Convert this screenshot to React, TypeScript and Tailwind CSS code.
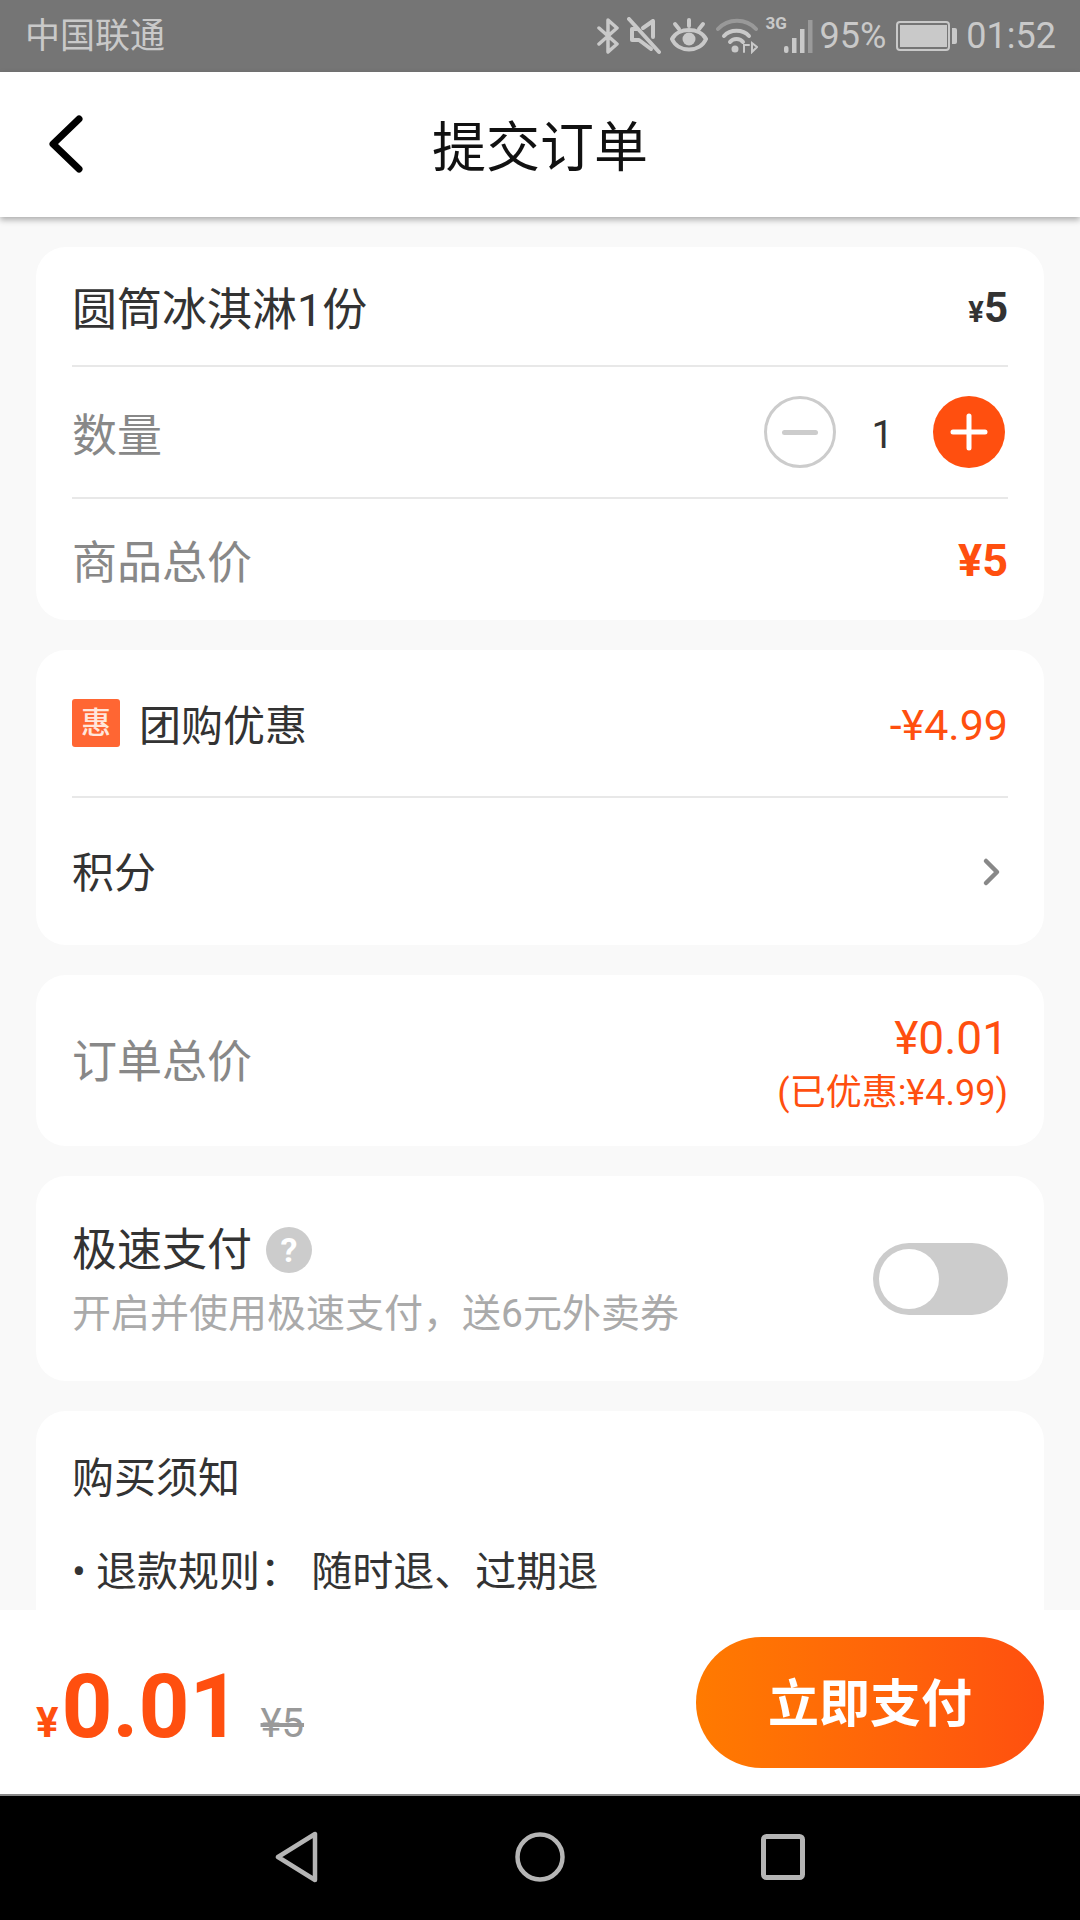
import React from 'react';

const FONT = "font-['Roboto','Noto_Sans_CJK_SC',sans-serif]";

const StatusIcons = () => (
  <div className="flex items-center text-[#c9c9c9]">
    {/* bluetooth */}
    <svg width="22" height="36" viewBox="0 0 22 36" fill="none" stroke="#c9c9c9" strokeWidth="3.5" strokeLinecap="round" strokeLinejoin="round">
      <path d="M2 10 L20 26 L11 34 L11 2 L20 10 L2 26" />
    </svg>
    {/* muted speaker */}
    <svg width="34" height="38" viewBox="0 0 34 38" fill="none" stroke="#c9c9c9" strokeWidth="4" strokeLinecap="round" strokeLinejoin="round" className="ml-[8px]">
      <path d="M26 4 L16 11 M26 4 L26 20 M5 12 L10 12 M5 12 L5 23 L12 23 L24 32" />
      <path d="M2 2 L32 35" />
    </svg>
    {/* eye comfort */}
    <svg width="38" height="36" viewBox="0 0 38 36" fill="none" stroke="#c9c9c9" strokeWidth="4" strokeLinecap="round" className="ml-[9px]">
      <path d="M2 21 C8 9 30 9 36 21 C30 35 8 35 2 21 Z" />
      <circle cx="19" cy="21" r="6.5" fill="#c9c9c9" stroke="none" />
      <path d="M19 2 L19 8 M5 6 L9 11 M33 6 L29 11" />
    </svg>
    {/* wifi */}
    <svg width="42" height="36" viewBox="0 0 42 36" fill="none" strokeLinecap="round" className="ml-[8px]">
      <path d="M2 11 C12 0 30 0 40 11" stroke="#999999" strokeWidth="4" />
      <path d="M8 18 C14 11 27 11 33 18" stroke="#c9c9c9" strokeWidth="4" />
      <path d="M14 24 C17 20 24 20 27 24" stroke="#c9c9c9" strokeWidth="4" />
      <circle cx="19" cy="31" r="3.5" fill="#c9c9c9" />
      <path d="M28 34 L28 27 L33 27 M36 25 L36 34 L41 29 Z" stroke="#c9c9c9" strokeWidth="2" />
    </svg>
    {/* 3G + signal */}
    <div className="relative ml-[8px] w-[54px] h-[36px]">
      <span className={`absolute left-0 top-[-5px] text-[17px] font-bold leading-[20px] text-[#c9c9c9] ${FONT}`}>3G</span>
      <svg width="54" height="36" viewBox="0 0 54 36" className="absolute left-0 top-0">
        <rect x="18" y="28" width="4.5" height="7" rx="2" fill="#c9c9c9" />
        <rect x="26" y="20" width="4.5" height="15" fill="#c9c9c9" />
        <rect x="34" y="11" width="4.5" height="24" fill="#c9c9c9" />
        <rect x="42" y="2" width="4.5" height="33" fill="#9a9a9a" />
      </svg>
    </div>
    <span className={`text-[36px] leading-none ${FONT}`}>95%</span>
    {/* battery */}
    <div className="ml-[10px] flex items-center">
      <div className="w-[54px] h-[30px] rounded-[4px] border-2 border-[#c9c9c9] p-[2px]">
        <div className="w-[47px] h-full bg-[#c9c9c9]" />
      </div>
      <div className="ml-[2px] w-[5px] h-[16px] rounded-r-[2px] bg-[#c9c9c9]" />
    </div>
    <span className={`ml-[9px] text-[36px] leading-none ${FONT}`}>01:52</span>
  </div>
);

const Divider = () => <div className="h-[2px] bg-[#e8e8e8]" />;

const App = () => {
  return (
    <div className={`flex flex-col w-[1080px] h-[1920px] overflow-hidden bg-[#f9f9f9] ${FONT}`}>
      <div className="flex items-center justify-between h-[72px] shrink-0 bg-[#757575] pl-[25px] pr-[24px]">
        <span className="text-[35px] leading-none text-[#c9c9c9]">中国联通</span>
        <StatusIcons />
      </div>

      <div className="relative z-10 flex items-center justify-center h-[145px] shrink-0 bg-white shadow-[0_3px_6px_rgba(0,0,0,0.3)]">
        <svg width="36" height="58" viewBox="0 0 36 58" fill="none" stroke="#000" strokeWidth="7" strokeLinecap="round" strokeLinejoin="round" className="absolute left-[48px] top-[43px]">
          <path d="M31 4 L5 29 L31 54" />
        </svg>
        <h1 className="pt-[8px] text-[54px] leading-none text-[#111]">提交订单</h1>
      </div>

      <main className="flex-1 min-h-0 overflow-hidden px-9 pt-[30px] flex flex-col gap-[30px]">
        <section className="shrink-0 bg-white rounded-[30px] px-9 h-[373px] flex flex-col">
          <div className="h-[118px] flex items-center justify-between">
            <span className="pt-[8px] text-[45px] text-[#333] leading-none">圆筒冰淇淋1份</span>
            <span className="pt-[4px] font-bold text-[#333] leading-none flex items-baseline">
              <span className="text-[29px]">¥</span>
              <span className="text-[42px]">5</span>
            </span>
          </div>
          <Divider />
          <div className="h-[130px] flex items-center justify-between">
            <span className="pt-[8px] text-[45px] text-[#888] leading-none">数量</span>
            <div className="flex items-center mr-[3px]">
              <div className="w-[72px] h-[72px] rounded-full border-[3px] border-[#cccccc] flex items-center justify-center">
                <div className="w-[36px] h-[5px] rounded-full bg-[#cccccc]" />
              </div>
              <span className="pt-[6px] pr-[4px] w-[97px] text-center text-[39px] text-[#333] leading-none">1</span>
              <div className="w-[72px] h-[72px] rounded-full bg-[#ff4f0f] flex items-center justify-center">
                <svg width="38" height="38" viewBox="0 0 38 38" stroke="#fff" strokeWidth="5" strokeLinecap="round">
                  <path d="M3 19 H35 M19 3 V35" />
                </svg>
              </div>
            </div>
          </div>
          <Divider />
          <div className="flex-1 flex items-center justify-between">
            <span className="pt-[7px] text-[45px] text-[#888] leading-none">商品总价</span>
            <span className="pt-[2px] text-[45px] font-bold text-[#ff4f0f] leading-none">¥5</span>
          </div>
        </section>

        <section className="shrink-0 bg-white rounded-[30px] px-9 h-[295px] flex flex-col">
          <div className="h-[146px] flex items-center justify-between">
            <div className="flex items-center">
              <div className="w-[48px] h-[48px] rounded-[3px] bg-[#ff6633] flex items-center justify-center text-[30px] font-medium leading-none text-[#ffe6dc]">惠</div>
              <span className="pt-[8px] ml-[19px] text-[42px] text-[#333] leading-none">团购优惠</span>
            </div>
            <span className="pt-[4px] text-[43px] text-[#ff4f0f] leading-none">-¥4.99</span>
          </div>
          <Divider />
          <div className="flex-1 flex items-center justify-between">
            <span className="pt-[5px] text-[42px] text-[#333] leading-none">积分</span>
            <svg width="20" height="30" viewBox="0 0 20 30" fill="none" stroke="#888" strokeWidth="4.5" strokeLinecap="round" strokeLinejoin="round" className="mr-[6px]">
              <path d="M4 4 L15 15 L4 26" />
            </svg>
          </div>
        </section>

        <section className="shrink-0 bg-white rounded-[30px] px-9 h-[171px] flex items-center justify-between">
          <span className="pt-[4px] text-[45px] text-[#888] leading-none">订单总价</span>
          <div className="flex flex-col items-end pt-[12px]">
            <span className="text-[46px] text-[#ff4f0f] leading-[52px]">¥0.01</span>
            <span className="text-[36px] text-[#ff4f0f] leading-[58px]">(已优惠:¥4.99)</span>
          </div>
        </section>

        <section className="shrink-0 bg-white rounded-[30px] px-9 h-[205px] flex items-center justify-between">
          <div className="flex flex-col gap-[12px]">
            <div className="flex items-center">
              <span className="pt-[2px] text-[45px] text-[#333] leading-[56px]">极速支付</span>
              <span className="ml-[14px] w-[46px] h-[46px] rounded-full bg-[#cccccc] flex items-center justify-center text-[34px] font-bold text-white leading-none">?</span>
            </div>
            <span className="text-[39px] text-[#aaaaaa] leading-[46px]">开启并使用极速支付，送6元外卖券</span>
          </div>
          <div className="mt-[1px] w-[135px] h-[72px] rounded-full bg-[#cccccc] p-[6px]">
            <div className="w-[60px] h-[60px] rounded-full bg-white" />
          </div>
        </section>

        <section className="shrink-0 bg-white rounded-[30px] px-9 pt-[44px] h-[300px]">
          <p className="text-[42px] text-[#333] leading-[48px]">购买须知</p>
          <p className="mt-[45px] text-[41px] text-[#333] leading-[48px]">• 退款规则： 随时退、过期退</p>
        </section>
      </main>

      <div className="shrink-0 h-[184px] bg-white flex items-center justify-between pl-9 pr-9">
        <div className="flex items-baseline mt-[8px]">
          <span className="text-[42px] font-bold text-[#ff4f0f] leading-none">¥</span>
          <span className="ml-[3px] text-[89px] font-bold text-[#ff4f0f] leading-none">0.01</span>
          <span className="ml-[20px] text-[40px] text-[#999] leading-none line-through">¥5</span>
        </div>
        <button className="w-[348px] h-[131px] pt-[4px] rounded-full bg-gradient-to-r from-[#ff7a00] to-[#ff4f0f] text-[51px] font-bold text-white leading-none">立即支付</button>
      </div>

      <div className="shrink-0 h-[126px] bg-black border-t-2 border-[#888] flex items-center justify-center gap-[196px] pb-[2px]">
        <svg width="44" height="52" viewBox="0 0 44 52" fill="none" stroke="#b5b5b5" strokeWidth="4.5" strokeLinejoin="round">
          <path d="M40 3 L40 49 L3 26 Z" />
        </svg>
        <svg width="50" height="50" viewBox="0 0 50 50" fill="none" stroke="#b5b5b5" strokeWidth="4.5">
          <circle cx="25" cy="25" r="22.5" />
        </svg>
        <svg width="44" height="46" viewBox="0 0 44 46" fill="none" stroke="#b5b5b5" strokeWidth="5">
          <rect x="2.5" y="2.5" width="39" height="41" rx="3" />
        </svg>
      </div>
    </div>
  );
};

export default App;
